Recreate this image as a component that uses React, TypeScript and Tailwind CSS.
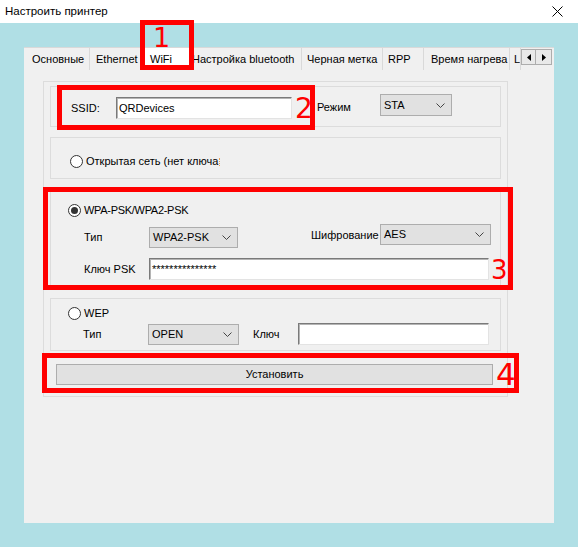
import React from 'react'

type TabDef = { label: string; w: string; pl: string; active?: boolean }

const tabs: TabDef[] = [
  { label: 'Основные', w: 'w-[66px]', pl: 'pl-[8px]' },
  { label: 'Ethernet', w: 'w-[53px]', pl: 'pl-[6px]' },
  { label: 'WiFi', w: 'w-[47px]', pl: 'pl-[7px]', active: true },
  { label: 'Настройка bluetooth', w: 'w-[112px]', pl: 'pl-[2px]' },
  { label: 'Черная метка', w: 'w-[81px]', pl: 'pl-[5px]' },
  { label: 'RPP', w: 'w-[41px]', pl: 'pl-[5px]' },
  { label: 'Время нагрева', w: 'w-[86px]', pl: 'pl-[7px]' },
  { label: 'L', w: 'w-[11px]', pl: 'pl-[4px]' },
]

function Chevron() {
  return (
    <svg width="9" height="5" viewBox="0 0 9 5">
      <path d="M0.5 0.5 L4.5 4.5 L8.5 0.5" fill="none" stroke="#444" strokeWidth="1" />
    </svg>
  )
}

function Combo({ value, className }: { value: string; className: string }) {
  return (
    <div
      className={`flex items-center justify-between border border-[#adadad] bg-[#e1e1e1] pl-[3px] pr-[6px] ${className}`}
    >
      <span>{value}</span>
      <Chevron />
    </div>
  )
}

function TextBox({ value, className }: { value?: string; className: string }) {
  return (
    <div
      className={`flex items-center border border-t-[#7a7a7a] border-l-[#7a7a7a] border-r-[#e3e3e3] border-b-[#e3e3e3] bg-white pl-[2px] shadow-[inset_1px_1px_0_#b4b4b4] ${className}`}
    >
      {value}
    </div>
  )
}

function Radio({ checked }: { checked?: boolean }) {
  return (
    <span className="flex h-[13px] w-[13px] shrink-0 items-center justify-center rounded-full border border-[#333333] bg-white">
      {checked && <span className="h-[7px] w-[7px] rounded-full bg-[#333333]" />}
    </span>
  )
}

export default function App() {
  return (
    <div className="relative h-[547px] w-[578px] overflow-hidden bg-[#b0dfe5] font-['Liberation_Sans',Arial,sans-serif] text-[11px] leading-none text-black">
      {/* title bar */}
      <div className="flex h-[23px] items-center justify-between bg-white pl-[5px] pr-[15px]">
        <span className="text-[11.5px]">Настроить принтер</span>
        <svg width="11" height="11" viewBox="0 0 11 11">
          <path d="M0.5 0.5 L10.5 10.5 M10.5 0.5 L0.5 10.5" stroke="#000" strokeWidth="1" />
        </svg>
      </div>

      {/* tab control */}
      <div className="ml-[24px] mt-[24px] h-[476px] w-[530px] bg-[#f0f0f0]">
        <div className="flex h-[23px] border-t border-[#d9d9d9]">
          {tabs.map((t) => (
            <div
              key={t.label}
              className={`flex h-full shrink-0 items-center overflow-hidden whitespace-nowrap border-r border-[#d9d9d9] ${t.w} ${t.pl} ${
                t.active ? 'bg-white' : 'bg-[#f0f0f0]'
              }`}
            >
              {t.label}
            </div>
          ))}
          <div className="mt-[1px] flex h-[16px] w-[31px]">
            <div className="flex w-[15px] items-center justify-center border border-[#adadad] bg-[#e9e9e9]">
              <svg width="4" height="7" viewBox="0 0 4 7">
                <path d="M4 0 L0 3.5 L4 7 Z" fill="#000" />
              </svg>
            </div>
            <div className="flex w-[16px] items-center justify-center border border-l-0 border-[#adadad] bg-[#e9e9e9]">
              <svg width="4" height="7" viewBox="0 0 4 7">
                <path d="M0 0 L4 3.5 L0 7 Z" fill="#000" />
              </svg>
            </div>
          </div>
        </div>

        {/* outer frame */}
        <div className="ml-[19px] mt-[11px] flex h-[316px] w-[465px] flex-col border border-[#dcdcdc] pl-[6px] pt-[4px]">
          {/* SSID */}
          <div className="flex h-[41px] w-[451px] items-start border border-[#dcdcdc] pl-[20px]">
            <div className="mt-[10px] flex h-[22px] w-[45px] items-center">SSID:</div>
            <TextBox value="QRDevices" className="mt-[10px] h-[22px] w-[176px]" />
            <div className="ml-[25px] mt-[9px] flex h-[22px] w-[63px] items-center">Режим</div>
            <Combo value="STA" className="mt-[7px] h-[22px] w-[72px]" />
          </div>

          {/* open network */}
          <div className="mt-[10px] flex h-[42px] w-[451px] items-start border border-[#dcdcdc] pl-[19px] pt-[17px]">
            <div className="flex h-[13px] items-center">
              <Radio />
              <span className="ml-[3px]">Открытая сеть (нет ключа</span>
              <span className="ml-[1px] h-[8px] border-l border-dotted border-[#f0a050]" />
            </div>
          </div>

          {/* WPA */}
          <div className="mt-[11px] flex h-[96px] w-[451px] flex-col border border-[#dcdcdc]">
            <div className="ml-[17px] mt-[13px] flex h-[13px] items-center">
              <Radio checked />
              <span className="ml-[3px] tracking-[-0.3px]">WPA-PSK/WPA2-PSK</span>
            </div>
            <div className="ml-[33px] mt-[7px] flex items-start">
              <div className="mt-[3px] flex h-[21px] w-[65px] items-center">Тип</div>
              <Combo value="WPA2-PSK" className="mt-[3px] h-[21px] w-[89px]" />
              <div className="ml-[73px] mt-[1px] flex h-[21px] w-[69px] items-center">Шифрование</div>
              <Combo value="AES" className="h-[21px] w-[111px]" />
            </div>
            <div className="ml-[33px] mt-[10px] flex items-start">
              <div className="flex h-[22px] w-[65px] items-center">Ключ PSK</div>
              <TextBox value="***************" className="h-[22px] w-[340px]" />
            </div>
          </div>

          {/* WEP */}
          <div className="mt-[12px] flex h-[53px] w-[451px] flex-col border border-[#dcdcdc]">
            <div className="ml-[17px] mt-[8px] flex h-[13px] items-center">
              <Radio />
              <span className="ml-[3px]">WEP</span>
            </div>
            <div className="ml-[32px] mt-[3px] flex items-start">
              <div className="flex h-[22px] w-[65px] items-center">Тип</div>
              <Combo value="OPEN" className="mt-[1px] h-[21px] w-[91px]" />
              <div className="ml-[14px] flex h-[22px] w-[45px] items-center">Ключ</div>
              <TextBox className="h-[22px] w-[191px]" />
            </div>
          </div>

          {/* submit */}
          <button className="ml-[6px] mt-[13px] flex h-[21px] w-[437px] items-center justify-center border border-[#adadad] bg-[#e1e1e1]">
            Установить
          </button>
        </div>
      </div>

      {/* red annotations */}
      <div className="absolute left-[140px] top-[20px] h-[50px] w-[54px] border-[5px] border-[#ff0000]" />
      <div className="absolute left-[153px] top-[24px] font-['DejaVu_Sans',sans-serif] text-[27px] leading-none text-[#ff0000]">1</div>

      <div className="absolute left-[57px] top-[85px] h-[45px] w-[258px] border-[5px] border-[#ff0000]" />
      <div className="absolute left-[295px] top-[95px] font-['DejaVu_Sans',sans-serif] text-[28px] leading-none text-[#ff0000]">2</div>

      <div className="absolute left-[43px] top-[187px] h-[103px] w-[470px] border-[5px] border-[#ff0000]" />
      <div className="absolute left-[491px] top-[257px] font-['DejaVu_Sans',sans-serif] text-[26px] leading-none text-[#ff0000]">3</div>

      <div className="absolute left-[42px] top-[353px] h-[40px] w-[477px] border-[5px] border-[#ff0000]" />
      <div className="absolute left-[496px] top-[359px] font-['DejaVu_Sans',sans-serif] text-[31px] leading-none text-[#ff0000]">4</div>
    </div>
  )
}
